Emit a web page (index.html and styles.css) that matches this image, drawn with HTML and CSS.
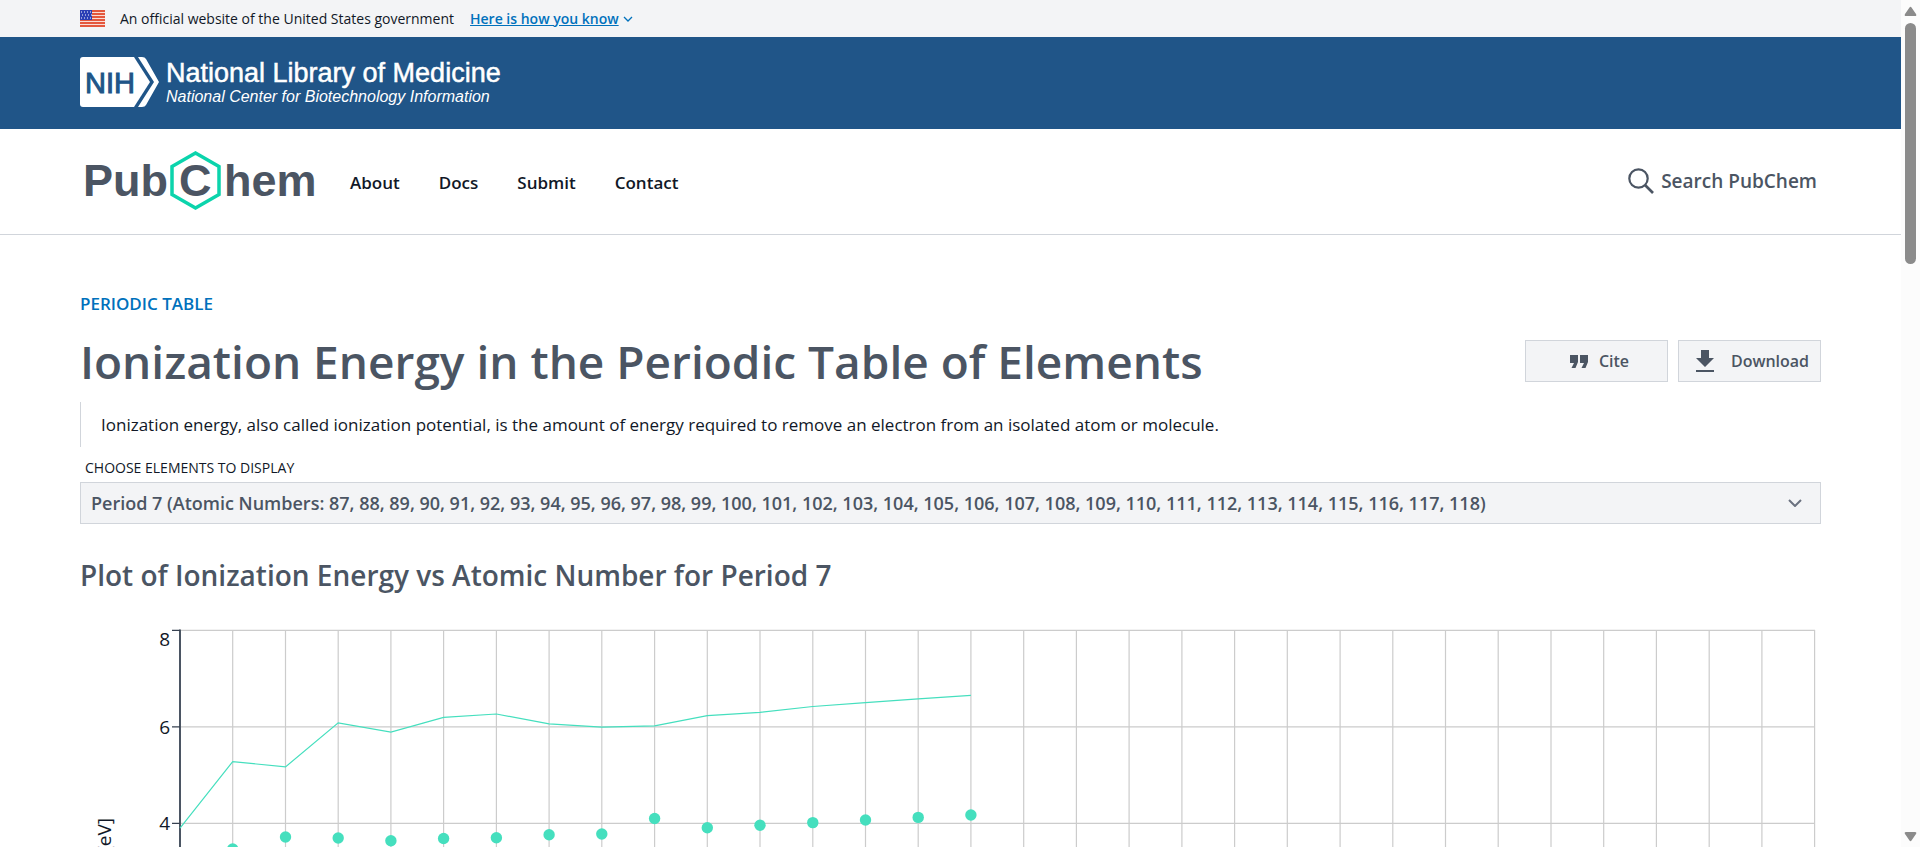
FILE: index.html
```html
<!DOCTYPE html>
<html lang="en">
<head>
<meta charset="utf-8">
<meta name="viewport" content="width=device-width, initial-scale=1">
<title>Ionization Energy | Periodic Table of Elements | PubChem</title>
<link rel="stylesheet" href="styles.css">
</head>
<body>
<div class="shell">
  <div class="page">
    <div class="gov-banner">
      <svg class="flag" viewBox="0 0 25 17" aria-hidden="true">
        <rect width="25" height="17" fill="#f9dcd6"/>
        <path d="M0 1h25M0 4h25M0 7h25M0 10h25M0 13h25M0 16h25" stroke="#e4573d" stroke-width="2"/>
        <rect width="12" height="10" fill="#2b3fb5"/>
        <path d="M1 2h11M2 5h10M1 8h11" stroke="#fff" stroke-width="1" stroke-dasharray="1 2"/>
      </svg>
      <span>An official website of the United States government</span>
      <button class="gov-link" type="button"><span>Here is how you know</span>
        <svg class="tiny-chevron" viewBox="0 0 10 6" aria-hidden="true"><path d="M1 1l4 4 4-4" fill="none" stroke="currentColor" stroke-width="1.3"/></svg>
      </button>
    </div>

    <div class="nlm-bar">
      <a class="nlm-logo" href="#" aria-label="NIH National Library of Medicine">
        <svg class="nih" viewBox="0 0 79 50">
          <path d="M3 0H54L70 25 54 50H3Q0 50 0 47V3Q0 0 3 0Z" fill="#fff"/>
          <path d="M58 0H62Q65 0 66 2L79 25 66 48Q65 50 62 50H58L74 25Z" fill="#fff"/>
          <text x="5" y="36">NIH</text>
        </svg>
        <span class="nlm-names">
          <span class="nlm-title">National Library of Medicine</span>
          <span class="nlm-sub">National Center for Biotechnology Information</span>
        </span>
      </a>
    </div>

    <header class="site-header">
      <a href="#" aria-label="PubChem">
        <svg class="pubchem" viewBox="0 0 238 60">
          <path d="M115.500 2L139 15.500V43.500L115.500 57 92 43.500V15.500Z" fill="none" stroke="#0bd4ac" stroke-width="3.500"/>
          <text x="3" y="45">Pub</text>
          <text x="99" y="45">C</text>
          <text x="144" y="45">hem</text>
        </svg>
      </a>
      <nav class="main-nav">
        <a href="#">About</a><a href="#">Docs</a><a href="#">Submit</a><a href="#">Contact</a>
      </nav>
      <button class="search" type="button">
        <svg viewBox="0 0 26 26" aria-hidden="true"><g fill="none" stroke="currentColor" stroke-width="2.200"><circle cx="10.500" cy="10.500" r="9.200"/><path d="M17 17l8 8" stroke-width="2.600"/></g></svg>
        Search PubChem
      </button>
    </header>

    <main class="content">
      <a class="crumb" href="#">PERIODIC TABLE</a>
      <div class="title-row">
        <h1>Ionization Energy in the Periodic Table of Elements</h1>
        <div class="actions">
          <button class="action" type="button">
            <svg class="quote-icon" viewBox="0 0 18 13" aria-hidden="true"><path d="M0 0H8V7L5.500 13H1.500L4 8H0ZM10 0H18V7L15.500 13H11.500L14 8H10Z" fill="currentColor"/></svg>
            Cite
          </button>
          <button class="action action-download" type="button">
            <svg class="download-icon" viewBox="0 0 18 22" aria-hidden="true"><path d="M5 0H13V8H18L9 17 0 8H5ZM0 20H18V22H0Z" fill="currentColor"/></svg>
            Download
          </button>
        </div>
      </div>
      <p class="description">Ionization energy, also called ionization potential, is the amount of energy required to remove an electron from an isolated atom or molecule.</p>
      <label class="field-label" for="elements">CHOOSE ELEMENTS TO DISPLAY</label>
      <div class="select-wrap">
        <select id="elements" class="select">
          <option>Period 7 (Atomic Numbers: 87, 88, 89, 90, 91, 92, 93, 94, 95, 96, 97, 98, 99, 100, 101, 102, 103, 104, 105, 106, 107, 108, 109, 110, 111, 112, 113, 114, 115, 116, 117, 118)</option>
        </select>
        <svg class="select-chevron" viewBox="0 0 14 8" aria-hidden="true"><path d="M1 1l6 6 6-6" fill="none" stroke="currentColor" stroke-width="2"/></svg>
      </div>
      <h2>Plot of Ionization Energy vs Atomic Number for Period 7</h2>
      <svg class="chart" viewBox="0 0 1741 580" role="img" aria-label="Ionization Energy vs Atomic Number">
        <path class="grid" d="M152.700 10V500M205.500 10V500M258.200 10V500M310.900 10V500M363.600 10V500M416.400 10V500M469.100 10V500M521.800 10V500M574.600 10V500M627.300 10V500M680 10V500M732.800 10V500M785.500 10V500M838.200 10V500M890.900 10V500M943.700 10V500M996.400 10V500M1049.100 10V500M1101.900 10V500M1154.600 10V500M1207.300 10V500M1260.100 10V500M1312.800 10V500M1365.500 10V500M1418.200 10V500M1471 10V500M1523.700 10V500M1576.400 10V500M1629.200 10V500M1681.900 10V500M1734.600 10V500M100 10.300H1735M100 106.900H1735M100 203.400H1735"/>
        <path class="axis" d="M100 9.500V500"/>
        <path class="ticks" d="M92 10.300H100M92 106.900H100M92 203.400H100"/>
        <g class="tick-text"><text x="90" y="26">8</text><text x="90" y="114">6</text><text x="90" y="210">4</text></g>
        <text class="axis-title" transform="translate(31 198) rotate(-90)">[eV]</text>
        <polyline class="series" points="100,208.200 152.700,141.600 205.500,146.900 258.200,102.900 310.900,112.100 363.600,97.400 416.400,94 469.100,103.900 521.800,107.100 574.600,105.800 627.300,95.700 680,92.300 732.800,86.500 785.500,82.700 838.200,78.800 890.900,75.400"/>
        <g class="dots">
          <circle cx="152.700" cy="229" r="5.700"/><circle cx="205.500" cy="217" r="5.700"/><circle cx="258.200" cy="218" r="5.700"/><circle cx="310.900" cy="220.700" r="5.700"/><circle cx="363.600" cy="218.500" r="5.700"/><circle cx="416.400" cy="217.700" r="5.700"/><circle cx="469.100" cy="214.700" r="5.700"/><circle cx="521.800" cy="214" r="5.700"/><circle cx="574.600" cy="198.500" r="5.700"/><circle cx="627.300" cy="207.700" r="5.700"/><circle cx="680" cy="205.200" r="5.700"/><circle cx="732.800" cy="202.600" r="5.700"/><circle cx="785.500" cy="200" r="5.700"/><circle cx="838.200" cy="197.400" r="5.700"/><circle cx="890.900" cy="195" r="5.700"/>
        </g>
      </svg>
    </main>
  </div>
  <div class="scrollbar" aria-hidden="true">
    <svg viewBox="0 0 13 10"><path d="M5.500 1.500Q6.500 0 7.500 1.500L12 8Q13 10 11 10H2Q0 10 1 8Z" fill="#8b8b8b"/></svg>
    <div class="track"><div class="thumb"></div></div>
    <svg viewBox="0 0 13 10"><path d="M5.500 8.500Q6.500 10 7.500 8.500L12 2Q13 0 11 0H2Q0 0 1 2Z" fill="#8b8b8b"/></svg>
  </div>
</div>
</body>
</html>
```

FILE: styles.css
```css
* { box-sizing: border-box; }

body {
  margin: 0;
  background: #fff;
  color: #111827;
  font-family: "Open Sans", "Noto Sans", sans-serif;
}

a { color: inherit; text-decoration: none; }

button {
  border: 0;
  padding: 0;
  background: none;
  font: inherit;
  color: inherit;
}

.shell {
  display: grid;
  grid-template-columns: minmax(0, 1fr) 19px;
  height: 100vh;
  overflow: hidden;
}

.page { overflow: hidden; }

/* Government banner */
.gov-banner {
  display: flex;
  align-items: center;
  height: 37px;
  padding: 0 80px;
  background: #f3f4f6;
  font-size: 14px;
}
.flag { width: 25px; height: 17px; margin-right: 15px; }
.gov-link {
  display: flex;
  align-items: center;
  gap: 4px;
  margin-left: 16px;
  color: #0071bc;
  font-weight: 600;
}
.gov-link span { text-decoration: underline; }
.tiny-chevron { width: 10px; height: 6px; }

/* NLM bar */
.nlm-bar {
  display: flex;
  align-items: center;
  height: 92px;
  padding: 0 80px 2px;
  background: #205588;
  color: #fff;
}
.nlm-logo {
  display: flex;
  align-items: center;
  gap: 7px;
  font-family: "Liberation Sans", Arial, sans-serif;
}
.nih { width: 79px; height: 50px; }
.nih text { font-size: 29px; fill: #205588; stroke: #205588; stroke-width: 1px; }
.nlm-names { display: flex; flex-direction: column; padding-top: 2px; }
.nlm-title { font-size: 27px; line-height: 28px; -webkit-text-stroke: 0.5px #fff; }
.nlm-sub { font-size: 16px; line-height: 20px; font-style: italic; }

/* Site header */
.site-header {
  display: flex;
  align-items: center;
  height: 106px;
  padding: 0 80px 2px;
  border-bottom: 1px solid #d1d5db;
}
.pubchem {
  display: block;
  width: 238px;
  height: 60px;
  font-family: "Liberation Sans", Arial, sans-serif;
  font-size: 45px;
  font-weight: 700;
  fill: #4b5563;
}
.main-nav {
  display: flex;
  gap: 39px;
  margin-left: 32px;
  padding-top: 3px;
  font-size: 17px;
  font-weight: 600;
}
.search {
  display: flex;
  align-items: center;
  gap: 7px;
  margin-left: auto;
  padding-right: 4px;
  color: #4b5563;
  font-size: 19px;
  font-weight: 600;
}
.search svg { width: 26px; height: 26px; }

/* Content */
.content { padding: 57px 80px 0; }
.crumb {
  display: block;
  color: #0071bc;
  font-size: 17px;
  font-weight: 600;
  line-height: 24px;
}
.title-row {
  display: flex;
  justify-content: space-between;
  align-items: center;
  margin-top: 13px;
}
h1, h2 { margin: 0; color: #4b5563; font-weight: 600; }
h1 { font-size: 46px; line-height: 64px; }
.actions { display: flex; gap: 10px; }
.action {
  display: flex;
  align-items: center;
  justify-content: center;
  gap: 11px;
  width: 143px;
  height: 42px;
  padding-left: 6px;
  border: 1px solid #d1d5db;
  background: #f3f4f6;
  color: #4b5563;
  font-size: 16px;
  font-weight: 600;
}
.action-download { gap: 17px; }
.quote-icon { width: 18px; height: 13px; }
.download-icon { width: 18px; height: 22px; }

.description {
  margin: 9px 0 0;
  padding: 10px 20px;
  border-left: 1px solid #d1d5db;
  font-size: 17px;
  line-height: 25px;
}
.field-label {
  display: block;
  margin: 11px 0 4px;
  padding-left: 5px;
  font-size: 14px;
  line-height: 20px;
}
.select-wrap { display: grid; align-items: center; color: #4b5563; }
.select {
  grid-area: 1 / 1;
  appearance: none;
  width: 100%;
  height: 42px;
  padding: 0 40px 0 10px;
  border: 1px solid #d1d5db;
  border-radius: 0;
  background: #f3f4f6;
  color: inherit;
  font: 600 18px "Open Sans", "Noto Sans", sans-serif;
}
.select-chevron {
  grid-area: 1 / 1;
  justify-self: end;
  width: 14px;
  height: 8px;
  margin-right: 19px;
  color: #6b7280;
  pointer-events: none;
}
h2 { margin-top: 30px; font-size: 28px; line-height: 42px; }

/* Chart */
.chart { display: block; width: 100%; margin-top: 24px; }
.grid { fill: none; stroke: #ccc; stroke-width: 1.2; }
.axis { fill: none; stroke: #4b5563; stroke-width: 2; }
.ticks { fill: none; stroke: #374151; stroke-width: 1.3; }
.tick-text, .axis-title { font-size: 19px; fill: #111827; text-anchor: end; }
.series { fill: none; stroke: #45dfbe; stroke-width: 1.2; }
.dots { fill: #45dfbe; }

/* Scrollbar */
.scrollbar {
  display: flex;
  flex-direction: column;
  align-items: center;
  gap: 7px;
  padding: 6px 0 5px;
  background: #fcfcfc;
}
.scrollbar svg { width: 13px; height: 10px; }
.track { flex: 1; width: 11px; }
.thumb { height: 30%; border-radius: 6px; background: #8b8b8b; }
```
